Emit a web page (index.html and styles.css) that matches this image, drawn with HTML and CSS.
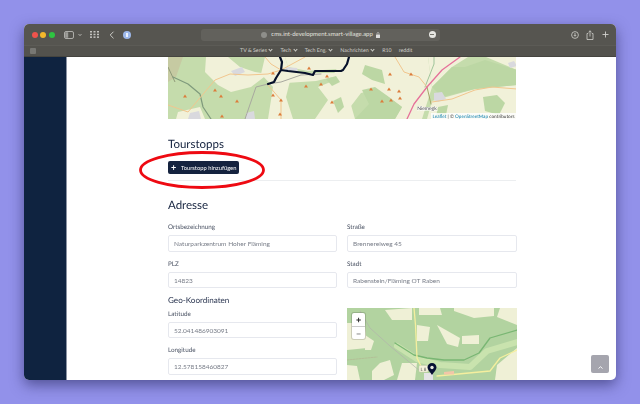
FILE: index.html
```html
<!DOCTYPE html>
<html lang="de">
<head>
  <meta charset="UTF-8" />
  <title>Smart Village CMS</title>
  <link rel="stylesheet" href="styles.css">
</head>
<body>
  <div class="window">
    <!-- Browser toolbar -->
    <div class="toolbar">
      <div class="lights">
        <span class="light red"></span>
        <span class="light yellow"></span>
        <span class="light green"></span>
      </div>
      <svg class="sidebar-icon" width="18" height="8" viewBox="0 0 18 8">
        <rect x="0.5" y="0.5" width="9" height="7" rx="1.5" fill="none" stroke="#c4c4c0" stroke-width="0.8"/>
        <rect x="1.2" y="1.2" width="3" height="5.600" fill="#9c9c98"/>
        <path d="M14.500 3l1.500 1.700L17.500 3" fill="none" stroke="#c4c4c0" stroke-width="0.8"/>
      </svg>
      <svg class="grid-icon" width="9" height="7" viewBox="0 0 9 7" fill="#c4c4c0">
        <rect x="0" y="0" width="2" height="1.500"/><rect x="3.500" y="0" width="2" height="1.500"/><rect x="7" y="0" width="2" height="1.500"/>
        <rect x="0" y="2.700" width="2" height="1.500"/><rect x="3.500" y="2.700" width="2" height="1.500"/><rect x="7" y="2.700" width="2" height="1.500"/>
        <rect x="0" y="5.400" width="2" height="1.500"/><rect x="3.500" y="5.400" width="2" height="1.500"/><rect x="7" y="5.400" width="2" height="1.500"/>
      </svg>
      <svg class="back-icon" width="6" height="8" viewBox="0 0 6 8">
        <path d="M4.500 .7L1.200 4l3.300 3.300" fill="none" stroke="#d8d8d4" stroke-width="0.9"/>
      </svg>
      <span class="favicon"><span class="favicon-dot"></span></span>
      <div class="address">
        <span class="site-dot"></span>
        <span class="url">cms.int-development.smart-village.app</span>
        <svg width="4" height="6" viewBox="0 0 4 6"><path d="M1 2.500V1.500a1 1 0 0 1 2 0v1" fill="none" stroke="#ddd" stroke-width="0.6"/><rect x="0" y="2.500" width="4" height="3.500" rx="0.5" fill="#ddd"/></svg>
        <span class="stop-btn"></span>
      </div>
      <div class="tool-right">
        <svg width="8" height="8" viewBox="0 0 8 8"><circle cx="4" cy="4" r="3.400" fill="none" stroke="#d0d0cc" stroke-width="0.8"/><path d="M4 2v3M2.800 4L4 5.300 5.200 4" fill="none" stroke="#d0d0cc" stroke-width="0.8"/></svg>
        <svg width="8" height="10" viewBox="0 0 8 10"><path d="M2.200 3.500H1v6h6v-6H5.800M4 6.500V.8M2.500 2.200L4 .8l1.500 1.400" fill="none" stroke="#d0d0cc" stroke-width="0.8"/></svg>
        <svg width="7" height="7" viewBox="0 0 7 7"><path d="M3.500 .5v6M.5 3.500h6" stroke="#d0d0cc" stroke-width="0.9"/></svg>
      </div>
    </div>
    <div class="bookmarks">
      <span class="tab-icon"></span>
      <div class="bookmark-list">
        <span>TV &amp; Series<i></i></span>
        <span>Tech<i></i></span>
        <span>Tech Eng.<i></i></span>
        <span>Nachrichten<i></i></span>
        <span>R10</span>
        <span>reddit</span>
      </div>
    </div>

    <!-- Page -->
    <div class="page">
      <aside class="sidebar"></aside>
      <main class="main">
        <div class="map map-top">
          <svg width="349" height="62" viewBox="0 0 349 62">
            <rect width="349" height="62" fill="#c5dcac"/>
            <g fill="#f1f1d9">
              <path d="M38 0h22l12 10 15 5 13 2-17 13-20 5-13-7-13-13z"/>
              <path d="M10 55l22-5 5 12H8z"/>
              <path d="M105 30l17-6-4 16 7 22h-25z"/>
              <path d="M97 0h20l3 10 10 5 7 1 30 0 6-3 0 5-25 6-30 2-12 5-13-14z"/>
              <path d="M117 0h70l-4 8-13 4-30 2-20-4z"/>
              <path d="M150 30l25-10 12 42h-40l13-19z"/>
              <path d="M175 0h85l4 30-10 32h-27l7-12-14-10-14-7-13 3-13 17-9 9-10-36z"/>
              <path d="M260 0h40l-16 10-20 20z"/>
              <path d="M318 0h31v13z"/>
              <path d="M264 44l43-12 42-4v34h-90z"/>
            </g>
            <g fill="#bcd7a4">
              <path d="M197 8l17 5 3 14-13-4-10-6z"/>
              <path d="M194 33l13-3 14 10 13 10-7 12h-40l14-15z"/>
              <path d="M264 30l20-20 13 0 20-7 32 10v15l-42 4-33 8z"/>
              <path d="M315 40l14-2 8 8-6 12-14-4z"/>
              <path d="M158 22l10-3 4 6-8 4z"/>
              <path d="M165 44l8-4 3 10-6 6z"/>
              <path d="M270 50l10-2-2 10-10 2z"/>
            </g>
            <path d="M0 0h15L8 20 0 25z" fill="#c6caa2"/>
            <path d="M0 10L7 25" stroke="#8f9a78" stroke-width="1" fill="none"/>
            <g fill="#d9d9de">
              <path d="M63 14l11-4 3 5-10 4z"/>
              <path d="M117 10l12 1 1 3-11 1z"/>
              <path d="M78 56l8-2 1 8h-9z"/>
              <path d="M266 36l8-1 4 7-8 3-4-2z"/>
              <path d="M22 56l9-2 2 8H20z"/>
              <path d="M340 6l6-2 3 5-7 2z"/>
            </g>
            <g fill="none" stroke-linecap="round" stroke-linejoin="round">
              <path d="M5 20l15 7 12 10 3 13 8 12" stroke="#7f9a7c" stroke-width="1.200"/>
              <path d="M257 30l9-23V0" stroke="#8bb98a" stroke-width="0.8"/>
              <path d="M77 62l11-32 12-3 13-2 20-7 20-1" stroke="#a8a89f" stroke-width="1"/>
              <path d="M0 48l20 7 27-32 15-6 18 1 20-1 13-4M97 0l6 7 10 6 24-13M100 28l13 15v19" stroke="#f1c68e" stroke-width="1"/>
              <path d="M227 0l9 15 15 5 8 10M264 45l20-3 23-9 17-3 25 2" stroke="#f1c68e" stroke-width="1"/>
              <path d="M259 30l4 17" stroke="#a3a868" stroke-width="1"/>
              <path d="M292 0l-18 13-15 17-13 17-7 15" stroke="#e6719a" stroke-width="1.300"/>
              <path d="M112 0l2 5-1 8-5 8-2 4-6 2M113 13l7 1 17 2 8 2 2-4 26 0 2-1 4-6 2-7" stroke="#06102a" stroke-width="2.200"/>
            </g>
            <g fill="#dc7c3a">
              <path d="M47 31.500l2 3h-4zM17 37.500l2 3h-4zM53 37.500l2 3h-4zM69 42.500l2 3h-4zM54 57.500l2 3h-4zM105 14.500l2 3h-4zM105 36.500l2 3h-4zM113 41.500l2 3h-4zM112 55.500l2 3h-4zM141 9.500l2 3h-4zM159 17.500l2 3h-4zM153 25.500l2 3h-4zM138 27.500l2 3h-4zM164 43.500l2 3h-4z"/>
              <path d="M222 15.500l2 3h-4zM243 15.500l2 3h-4zM203 30.500l2 3h-4zM221 30.500l2 3h-4zM231 32.500l2 3h-4zM232 39.500l2 3h-4zM223 41.500l2 3h-4zM214 42.500l2 3h-4z"/>
            </g>
            <text class="map-label" x="259" y="53" text-anchor="middle">Niemegk</text>
          </svg>
          <div class="attribution"><a>Leaflet</a> | © <a>OpenStreetMap</a> contributors</div>
        </div>

        <h2 class="section-title">Tourstopps</h2>
        <button class="btn-add"><span class="plus">+</span>Tourstopp hinzufügen</button>
        <hr class="divider">

        <h2 class="section-title address-title">Adresse</h2>
        <div class="form-grid">
          <div class="form-col">
            <div class="field">
              <label>Ortsbezeichnung</label>
              <input value="Naturparkzentrum Hoher Fläming">
            </div>
            <div class="field">
              <label>PLZ</label>
              <input value="14823">
            </div>
            <h3 class="geo-title">Geo-Koordinaten</h3>
            <div class="field">
              <label>Latitude</label>
              <input value="52.041486903091">
            </div>
            <div class="field">
              <label>Longitude</label>
              <input value="12.578158460827">
            </div>
          </div>
          <div class="form-col">
            <div class="field">
              <label>Straße</label>
              <input value="Brennereiweg 45">
            </div>
            <div class="field">
              <label>Stadt</label>
              <input value="Rabenstein/Fläming OT Raben">
            </div>
            <div class="map map-geo">
              <svg width="170" height="72" viewBox="0 0 170 72">
                <rect width="170" height="72" fill="#b2d3a0"/>
                <g fill="#eff0d6">
                  <path d="M38 2l27-2v12H45z"/>
                  <path d="M72 0h21l2 7H72z"/>
                  <path d="M107 0h40v8l-20 2-20-7z"/>
                  <path d="M153 0h17v17l-20-8z"/>
                  <path d="M70 17l13 2-2 14H70z"/>
                  <path d="M90 17l23 13-2 9-11-3z"/>
                  <path d="M115 28l17-1v9h-17z"/>
                  <path d="M0 15h18l2 25-20 2z"/>
                  <path d="M18 27l9 6-3 9h-6z"/>
                  <path d="M33 55l10-3 4 15-10 5H25v-9z"/>
                  <path d="M55 55h15l-2 17H50z"/>
                  <path d="M0 57l10 1 3 14H0z"/>
                  <path d="M150 57l20-17v32h-22z"/>
                </g>
                <g fill="none" stroke-linejoin="round" stroke-linecap="round">
                  <path d="M50 38l20 13 23 6 30 2 17-16 30-9" stroke="#c9e3ae" stroke-width="6"/>
                  <path d="M48 35l19 12 13 3 17 2 20 0 15-7 11-15 27-8" stroke="#79b673" stroke-width="1.300"/>
                  <path d="M13 3l10 17 20 18 30 25" stroke="#b2b2ac" stroke-width="0.7"/>
                  <path d="M0 52l30-3" stroke="#b2ac8c" stroke-width="0.5" stroke-dasharray="2 1"/>
                  <path d="M67 0l1.500 17 1.500 33 5 10" stroke="#f5ef9e" stroke-width="1.300"/>
                  <path d="M90 68l53-5 10-13 17-8" stroke="#f5ef9e" stroke-width="1.300"/>
                </g>
                <path d="M97 64l10-1v3.500H97z" fill="#f2c6a8"/>
                <path d="M77 65h9v7h-9z" fill="#e4e4e6"/>
                <rect x="72" y="57.500" width="9" height="6.500" rx="1" fill="#f4f2dc" stroke="#c9c7ae" stroke-width="0.4"/>
                <text class="road-label" x="73.500" y="62.500">L 8</text>
                <path d="M85 67c-2-3-4.500-5.500-4.500-7.500a4.500 4.500 0 0 1 9 0c0 2-2.500 4.500-4.500 7.500z" fill="#071033"/>
                <circle cx="85" cy="59.500" r="1.700" fill="#e9e9e0"/>
              </svg>
              <div class="zoom-control">
                <span>+</span>
                <span class="zoom-out">−</span>
              </div>
            </div>
          </div>
        </div>
      </main>
    </div>

    <button class="scroll-top"><svg width="5" height="3" viewBox="0 0 5 3"><path d="M.5 2.500L2.500 .7l2 1.800" fill="none" stroke="#fff" stroke-width="0.9"/></svg></button>
    <svg class="highlight" width="130" height="40" viewBox="0 0 130 40">
      <ellipse cx="65" cy="20" rx="61.500" ry="17.500" fill="none" stroke="#ee0a12" stroke-width="2.800"/>
    </svg>
  </div>
</body>
</html>
```

FILE: styles.css
```css
body {
  margin: 0;
  padding: 24px;
  box-sizing: border-box;
  height: 404px;
  overflow: hidden;
  background: #9291ea;
  font-family: "Lato", Arial, sans-serif;
  text-rendering: geometricPrecision;
}
.window {
  position: relative;
  height: 356px;
  border-radius: 5px;
  display: flex;
  flex-direction: column;
  background: #fff;
  box-shadow: 0 5px 14px rgba(30,30,80,0.55);
  filter: blur(0.3px);
}
.toolbar {
  height: 21px;
  flex: none;
  display: flex;
  align-items: center;
  padding: 0 7.500px 0 7.600px;
  background: #565550;
  border-radius: 5px 5px 0 0;
}
.lights {
  display: flex;
  gap: 2.500px;
}
.light {
  width: 6px;
  height: 6px;
  border-radius: 50%;
}
.red { background: #f0534c; }
.yellow { background: #f5b82b; }
.green { background: #2ec441; }
.sidebar-icon {
  flex: none;
  margin-left: 9.500px;
}
.grid-icon {
  flex: none;
  margin-left: 8px;
}
.back-icon {
  flex: none;
  margin-left: 10px;
}
.favicon {
  width: 8px;
  height: 8px;
  margin-left: 8px;
  display: flex;
  align-items: center;
  justify-content: center;
  border-radius: 50%;
  background: #9db8ea;
}
.favicon-dot {
  width: 2px;
  height: 4px;
  background: #fff;
  opacity: 0.8;
}
.address {
  width: 239px;
  height: 12px;
  margin-left: 70px;
  display: flex;
  align-items: center;
  justify-content: center;
  position: relative;
  background: #62615c;
  border-radius: 3px;
  color: #e2e2de;
  font-size: 6px;
}
.url {
  margin: 0 3px 0 4px;
}
.site-dot {
  width: 6px;
  height: 6px;
  border-radius: 50%;
  background: #8e8e8a;
}
.stop-btn {
  position: absolute;
  right: 4.500px;
  top: 2.500px;
  width: 7px;
  height: 7px;
  border-radius: 50%;
  background: #e6e6e2;
}
.stop-btn::after {
  content: "";
  position: absolute;
  left: 1.500px;
  top: 3px;
  width: 4px;
  height: 1px;
  background: #77776f;
}
.tool-right {
  margin-left: auto;
  display: flex;
  align-items: center;
  gap: 7.500px;
}
.bookmarks {
  height: 12px;
  flex: none;
  display: flex;
  align-items: center;
  padding: 0 6px;
  background: #53524d;
  border-top: 1px solid #5c5b56;
  border-bottom: 1px solid #45443f;
  box-sizing: border-box;
}
.tab-icon {
  width: 6px;
  height: 6px;
  background: #777773;
  border-radius: 1px;
}
.bookmark-list {
  margin-left: 204px;
  display: flex;
  gap: 7px;
  color: #cfcfca;
  font-size: 5.300px;
  white-space: nowrap;
}
.bookmark-list i {
  display: inline-block;
  width: 2px;
  height: 2px;
  margin: 0 1px 1px 2.500px;
  border-right: 0.7px solid #cfcfca;
  border-bottom: 0.7px solid #cfcfca;
  transform: rotate(45deg);
}
.page {
  flex: 1;
  min-height: 0;
  display: flex;
  overflow: hidden;
  border-radius: 0 0 5px 5px;
}
.sidebar {
  width: 42px;
  flex: none;
  background: #0f2340;
  border-right: 1px solid #8b93a3;
}
.main {
  flex: 1;
  min-width: 0;
  padding: 0 100px 0 101px;
  color: #15233f;
}
.map {
  position: relative;
  overflow: hidden;
}
.map svg {
  display: block;
  filter: blur(0.4px);
}
.map-top {
  height: 62px;
}
.map-label {
  font-size: 5px;
  fill: #444;
  paint-order: stroke;
  stroke: #fff;
  stroke-width: 1px;
}
.road-label {
  font-size: 4.500px;
  fill: #555;
}
.attribution {
  position: absolute;
  right: 0;
  bottom: 0;
  padding: 0 1.500px;
  background: rgba(255,255,255,0.8);
  color: #333;
  font-size: 4.700px;
  line-height: 6px;
}
.attribution a {
  color: #0078a8;
}
.section-title {
  margin: 18px 0 0;
  font-size: 11.500px;
  line-height: 15px;
  font-weight: 400;
}
.btn-add {
  display: flex;
  align-items: center;
  height: 13px;
  margin-top: 9px;
  padding: 0 3px;
  border: none;
  border-radius: 2px;
  background: #15233f;
  color: #fff;
  font-family: inherit;
  font-size: 5.800px;
}
.plus {
  width: 10px;
  text-align: left;
  font-size: 9px;
  line-height: 9px;
  font-weight: 700;
}
.divider {
  margin: 6px 0 0;
  border: none;
  border-top: 1px solid #eceef0;
}
.address-title {
  margin-top: 17px;
}
.form-grid {
  margin-top: 9px;
  display: grid;
  grid-template-columns: 169px 170px;
  column-gap: 10px;
}
.form-col {
  min-width: 0;
}
.field {
  margin-bottom: 7px;
}
.field label {
  display: block;
  height: 13px;
  color: #4a5263;
  font-size: 6.300px;
  line-height: 11px;
}
.field input {
  display: block;
  width: 100%;
  height: 16.700px;
  box-sizing: border-box;
  padding: 0 5px;
  border: 1px solid #e6e8ee;
  border-radius: 2px;
  background: #fff;
  color: #777c87;
  font-family: inherit;
  font-size: 6.500px;
}
.geo-title {
  margin: 0 0 3.300px;
  font-size: 8.100px;
  line-height: 10px;
  font-weight: 400;
  color: #2a3550;
}
.map-geo {
  margin-top: 19.300px;
  height: 72px;
}
.zoom-control {
  position: absolute;
  left: 5px;
  top: 5px;
  width: 13px;
  height: 26px;
  display: flex;
  flex-direction: column;
  background: #fff;
  border-radius: 2px;
  box-shadow: 0 0 0 1px rgba(0,0,0,0.15);
  color: #222;
  font-size: 9px;
  font-weight: 700;
  line-height: 13px;
  text-align: center;
}
.zoom-out {
  border-top: 1px solid #ccc;
  color: #777;
}
.scroll-top {
  position: absolute;
  left: 567px;
  top: 331px;
  width: 18px;
  height: 18px;
  padding: 0;
  border: none;
  border-radius: 2px;
  background: #a5a5ae;
}
.highlight {
  position: absolute;
  left: 113px;
  top: 126px;
}
```
